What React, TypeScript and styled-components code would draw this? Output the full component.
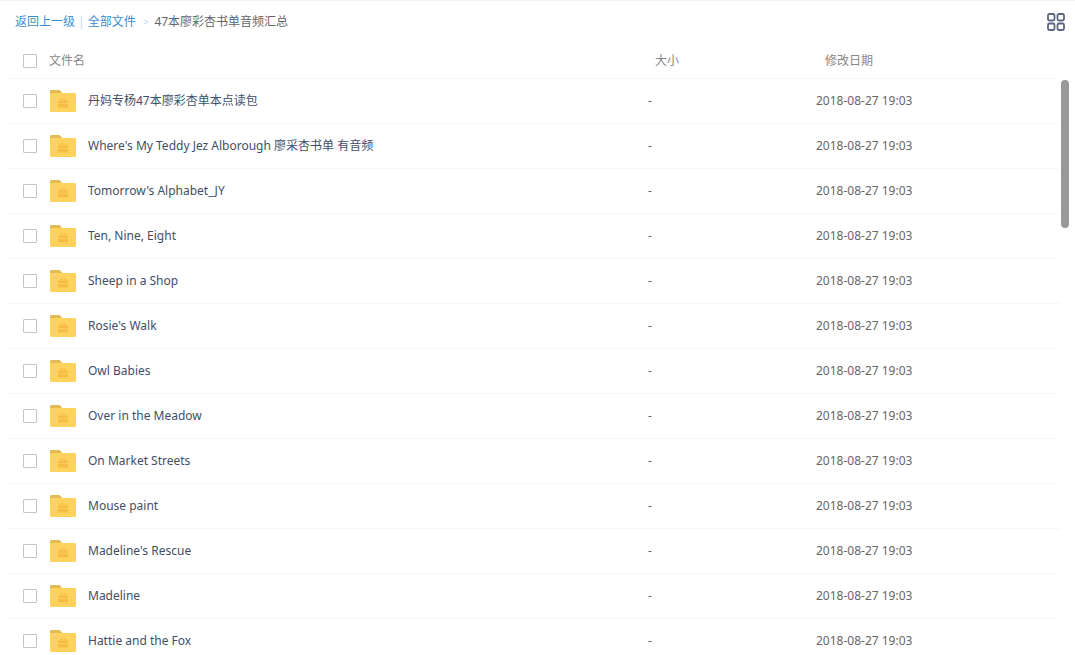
import React, { ReactElement } from 'react';
import styled, { createGlobalStyle } from 'styled-components';

const FILE_NAMES = [
  '丹妈专杨47本廖彩杏单本点读包',
  "Where's My Teddy Jez Alborough 廖采杏书单 有音频",
  "Tomorrow's Alphabet_JY",
  'Ten, Nine, Eight',
  'Sheep in a Shop',
  "Rosie's Walk",
  'Owl Babies',
  'Over in the Meadow',
  'On Market Streets',
  'Mouse paint',
  "Madeline's Rescue",
  'Madeline',
  'Hattie and the Fox',
];

function FolderIcon(): ReactElement {
  return (
    <FolderSvg viewBox="0 0 26 22">
      <path d="M0 1.500C0 .6.6 0 1.500 0h7c1 0 1.600.3 2.100 1L12.500 3.500H0z" fill="#e3bb55" />
      <path d="M0 3h24.500c.9 0 1.500.6 1.500 1.500v16c0 .9-.6 1.500-1.500 1.500H1.500C.6 22 0 21.400 0 20.500z" fill="#fdd35e" />
      <path d="M8 10.500h10v7H8z" fill="#f6bd45" />
      <path d="M10.800 10.500V9h4.400v1.500" fill="none" stroke="#f6bd45" strokeWidth="1.200" />
      <path d="M8 13.500h10" stroke="#fdd35e" strokeWidth="0.800" />
    </FolderSvg>
  );
}

function GridIcon(): ReactElement {
  return (
    <GridSvg viewBox="0 0 18 18">
      <rect x="1" y="1" width="6.500" height="6.500" rx="1.500" />
      <rect x="10.500" y="1" width="6.500" height="6.500" rx="1.500" />
      <rect x="1" y="10.500" width="6.500" height="6.500" rx="1.500" />
      <rect x="10.500" y="10.500" width="6.500" height="6.500" rx="1.500" />
    </GridSvg>
  );
}

function App(): ReactElement {
  return (
    <Page>
      <GlobalStyle />
      <Toolbar>
        <Crumbs>
          <CrumbLink>返回上一级</CrumbLink>
          <Pipe>|</Pipe>
          <CrumbLink>全部文件</CrumbLink>
          <Arrow>&gt;</Arrow>
          <Current>47本廖彩杏书单音频汇总</Current>
        </Crumbs>
        <GridIcon />
      </Toolbar>
      <HeaderRow>
        <CheckBox />
        <NameHead>文件名</NameHead>
        <SizeHead>大小</SizeHead>
        <DateHead>修改日期</DateHead>
      </HeaderRow>
      {FILE_NAMES.map((name) => (
        <FileRow key={name}>
          <CheckBox />
          <FolderIcon />
          <FileName>{name}</FileName>
          <FileSize>-</FileSize>
          <FileDate>2018-08-27 19:03</FileDate>
        </FileRow>
      ))}
      <ScrollThumb />
    </Page>
  );
}

const GlobalStyle = createGlobalStyle`
  html, body {
    margin: 0;
    height: 100%;
    overflow: hidden;
    background: #ffffff;
  }
`;

const Page = styled.div`
  position: relative;
  width: 1075px;
  height: 655px;
  overflow: hidden;
  font-family: 'Noto Sans', 'Noto Sans CJK SC', sans-serif;
  font-size: 12px;
  line-height: 16px;
  color: #424e67;
  border-top: 1px solid #f4f4f4;
  box-sizing: border-box;
`;

const Toolbar = styled.div`
  display: flex;
  align-items: center;
  justify-content: space-between;
  height: 42px;
  padding: 0 10px 0 15px;
`;

const Crumbs = styled.div`
  display: flex;
  align-items: center;
`;

const CrumbLink = styled.span`
  color: #3b8cd0;
`;

const Pipe = styled.span`
  margin: 0 3px;
  color: #c4d8f4;
`;

const Arrow = styled.span`
  margin: 0 6px 0 7px;
  font-size: 10px;
  color: #c4d8f4;
`;

const Current = styled.span`
  color: #666666;
`;

const GridSvg = styled.svg`
  width: 18px;
  height: 18px;
  fill: none;
  stroke: #5b667f;
  stroke-width: 1.800;
`;

const HeaderRow = styled.div`
  display: flex;
  align-items: center;
  height: 35px;
  margin: 0 15px 0 8px;
  padding-left: 15px;
  border-bottom: 1px solid #f7f7f7;
  color: #888888;
`;

const NameHead = styled.span`
  width: 606px;
  margin-left: 12px;
`;

const SizeHead = styled.span`
  width: 170px;
`;

const DateHead = styled.span``;

const FileRow = styled.div`
  display: flex;
  align-items: center;
  height: 44px;
  margin: 0 15px 0 8px;
  padding-left: 15px;
  border-bottom: 1px solid #f7f7f7;
  color: #424e67;
`;

const CheckBox = styled.span`
  flex: none;
  box-sizing: border-box;
  width: 14px;
  height: 14px;
  border: 1px solid #c4c4c4;
  border-radius: 1px;
`;

const FolderSvg = styled.svg`
  flex: none;
  width: 26px;
  height: 22px;
  margin: 0 12px 0 13px;
`;

const FileName = styled.span`
  width: 560px;
  white-space: nowrap;
`;

const FileSize = styled.span`
  width: 168px;
  color: #666666;
`;

const FileDate = styled.span`
  color: #666666;
`;

const ScrollThumb = styled.div`
  position: absolute;
  top: 79px;
  left: 1061px;
  width: 8px;
  height: 148px;
  border-radius: 4px;
  background: #999999;
`;

export default App;
